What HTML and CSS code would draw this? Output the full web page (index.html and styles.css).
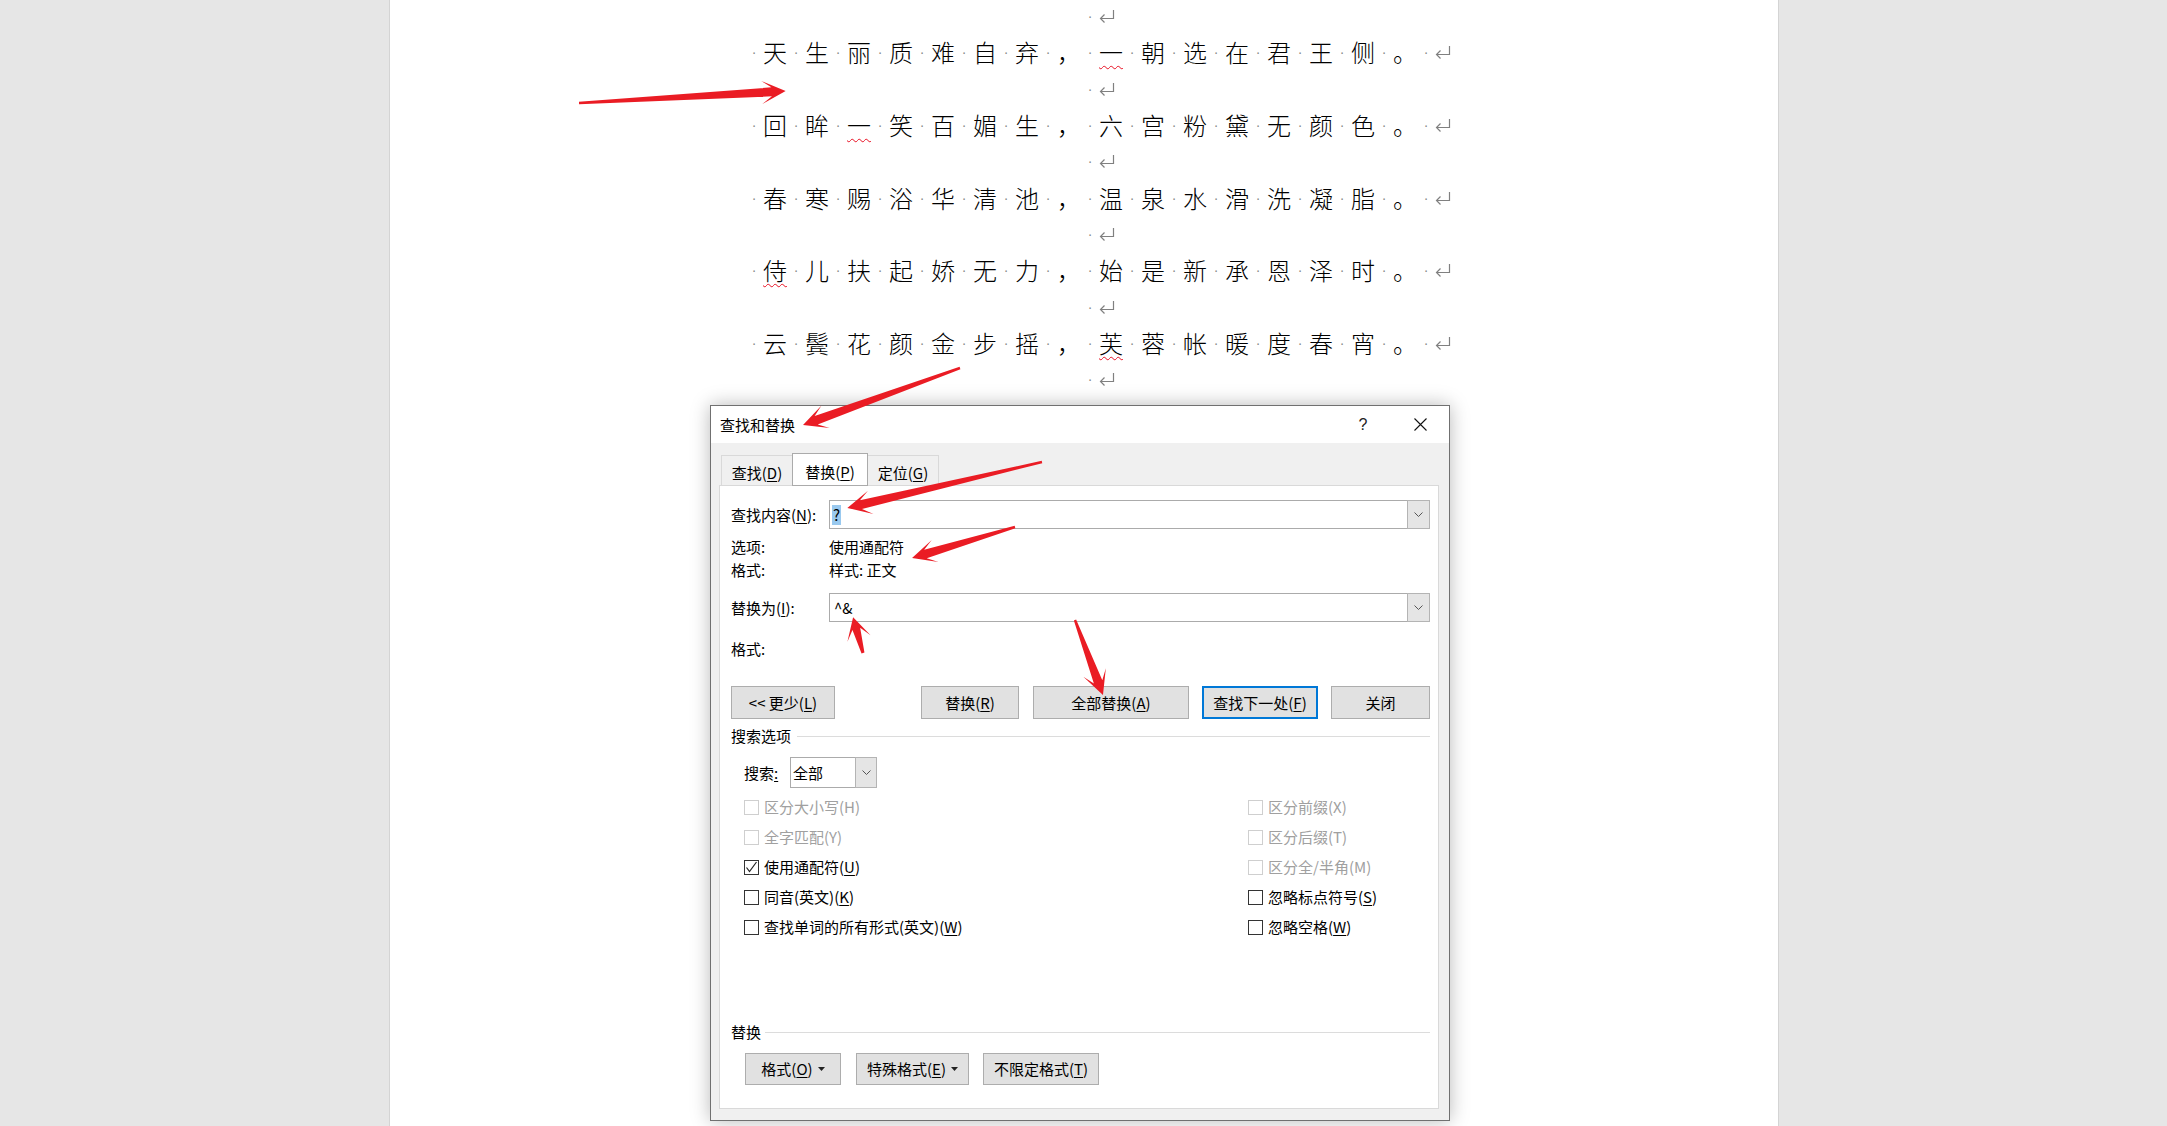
FILE: index.html
```html
<!DOCTYPE html>
<html lang="zh-CN">
<head>
<meta charset="utf-8">
<title>查找和替换</title>
<link rel="stylesheet" href="styles.css">
</head>
<body>
<div class="page">
  <div class="doc">
    <p class="ln"><i class="s">·</i><svg class="ret" viewBox="0 0 16 14"><path d="M14.5 0 V8.5 H1.5 M5.5 4.5 L1.5 8.5 L5.5 12.5"/></svg></p>
    <p class="ln"><i class="s">·</i>天<i class="s">·</i>生<i class="s">·</i>丽<i class="s">·</i>质<i class="s">·</i>难<i class="s">·</i>自<i class="s">·</i>弃<i class="s">·</i>，<i class="s">·</i><span class="err">一</span><i class="s">·</i>朝<i class="s">·</i>选<i class="s">·</i>在<i class="s">·</i>君<i class="s">·</i>王<i class="s">·</i>侧<i class="s">·</i>。<i class="s">·</i><svg class="ret" viewBox="0 0 16 14"><path d="M14.5 0 V8.5 H1.5 M5.5 4.5 L1.5 8.5 L5.5 12.5"/></svg></p>
    <p class="ln"><i class="s">·</i><svg class="ret" viewBox="0 0 16 14"><path d="M14.5 0 V8.5 H1.5 M5.5 4.5 L1.5 8.5 L5.5 12.5"/></svg></p>
    <p class="ln"><i class="s">·</i>回<i class="s">·</i>眸<i class="s">·</i><span class="err">一</span><i class="s">·</i>笑<i class="s">·</i>百<i class="s">·</i>媚<i class="s">·</i>生<i class="s">·</i>，<i class="s">·</i>六<i class="s">·</i>宫<i class="s">·</i>粉<i class="s">·</i>黛<i class="s">·</i>无<i class="s">·</i>颜<i class="s">·</i>色<i class="s">·</i>。<i class="s">·</i><svg class="ret" viewBox="0 0 16 14"><path d="M14.5 0 V8.5 H1.5 M5.5 4.5 L1.5 8.5 L5.5 12.5"/></svg></p>
    <p class="ln"><i class="s">·</i><svg class="ret" viewBox="0 0 16 14"><path d="M14.5 0 V8.5 H1.5 M5.5 4.5 L1.5 8.5 L5.5 12.5"/></svg></p>
    <p class="ln"><i class="s">·</i>春<i class="s">·</i>寒<i class="s">·</i>赐<i class="s">·</i>浴<i class="s">·</i>华<i class="s">·</i>清<i class="s">·</i>池<i class="s">·</i>，<i class="s">·</i>温<i class="s">·</i>泉<i class="s">·</i>水<i class="s">·</i>滑<i class="s">·</i>洗<i class="s">·</i>凝<i class="s">·</i>脂<i class="s">·</i>。<i class="s">·</i><svg class="ret" viewBox="0 0 16 14"><path d="M14.5 0 V8.5 H1.5 M5.5 4.5 L1.5 8.5 L5.5 12.5"/></svg></p>
    <p class="ln"><i class="s">·</i><svg class="ret" viewBox="0 0 16 14"><path d="M14.5 0 V8.5 H1.5 M5.5 4.5 L1.5 8.5 L5.5 12.5"/></svg></p>
    <p class="ln"><i class="s">·</i><span class="err">侍</span><i class="s">·</i>儿<i class="s">·</i>扶<i class="s">·</i>起<i class="s">·</i>娇<i class="s">·</i>无<i class="s">·</i>力<i class="s">·</i>，<i class="s">·</i>始<i class="s">·</i>是<i class="s">·</i>新<i class="s">·</i>承<i class="s">·</i>恩<i class="s">·</i>泽<i class="s">·</i>时<i class="s">·</i>。<i class="s">·</i><svg class="ret" viewBox="0 0 16 14"><path d="M14.5 0 V8.5 H1.5 M5.5 4.5 L1.5 8.5 L5.5 12.5"/></svg></p>
    <p class="ln"><i class="s">·</i><svg class="ret" viewBox="0 0 16 14"><path d="M14.5 0 V8.5 H1.5 M5.5 4.5 L1.5 8.5 L5.5 12.5"/></svg></p>
    <p class="ln"><i class="s">·</i>云<i class="s">·</i>鬓<i class="s">·</i>花<i class="s">·</i>颜<i class="s">·</i>金<i class="s">·</i>步<i class="s">·</i>摇<i class="s">·</i>，<i class="s">·</i><span class="err">芙</span><i class="s">·</i>蓉<i class="s">·</i>帐<i class="s">·</i>暖<i class="s">·</i>度<i class="s">·</i>春<i class="s">·</i>宵<i class="s">·</i>。<i class="s">·</i><svg class="ret" viewBox="0 0 16 14"><path d="M14.5 0 V8.5 H1.5 M5.5 4.5 L1.5 8.5 L5.5 12.5"/></svg></p>
    <p class="ln"><i class="s">·</i><svg class="ret" viewBox="0 0 16 14"><path d="M14.5 0 V8.5 H1.5 M5.5 4.5 L1.5 8.5 L5.5 12.5"/></svg></p>
  </div>
</div>

<div class="dlg">
  <div class="titlebar">
    <span class="ttl">查找和替换</span>
    <span class="tbtn help">?</span>
    <span class="tbtn close"><svg width="13" height="13" viewBox="0 0 13 13"><path d="M0.5 0.5 L12.5 12.5 M12.5 0.5 L0.5 12.5" stroke="#111" stroke-width="1.1"/></svg></span>
  </div>
  <div class="dbody">
    <div class="tabs">
      <div class="tab first"><span>查找(<u>D</u>)</span></div>
      <div class="tab sel"><span>替换(<u>P</u>)</span></div>
      <div class="tab last"><span>定位(<u>G</u>)</span></div>
    </div>
    <div class="panel">
      <div class="frow">
        <span class="lbl">查找内容(<u>N</u>):</span>
        <div class="combo">
          <div class="cval"><span class="hl">?</span></div>
          <div class="cdrop"><svg width="9" height="5" viewBox="0 0 9 5"><path d="M0.5 0.5 L4.5 4.5 L8.5 0.5" fill="none" stroke="#555" stroke-width="1"/></svg></div>
        </div>
      </div>
      <div class="info first"><span class="lbl">选项:</span><span>使用通配符</span></div>
      <div class="info"><span class="lbl">格式:</span><span>样式: 正文</span></div>
      <div class="frow rrow">
        <span class="lbl">替换为(<u>I</u>):</span>
        <div class="combo">
          <div class="cval"><span class="val">^&amp;</span></div>
          <div class="cdrop"><svg width="9" height="5" viewBox="0 0 9 5"><path d="M0.5 0.5 L4.5 4.5 L8.5 0.5" fill="none" stroke="#555" stroke-width="1"/></svg></div>
        </div>
      </div>
      <div class="info fmt2"><span class="lbl">格式:</span></div>
      <div class="btnrow">
        <div class="btn b-less"><span>&lt;&lt; 更少(<u>L</u>)</span></div>
        <div class="btngrp">
          <div class="btn b-rep"><span>替换(<u>R</u>)</span></div>
          <div class="btn b-all"><span>全部替换(<u>A</u>)</span></div>
          <div class="btn b-next"><span>查找下一处(<u>F</u>)</span></div>
          <div class="btn b-close"><span>关闭</span></div>
        </div>
      </div>
      <div class="grp">搜索选项</div>
      <div class="srow">
        <span class="slbl">搜索<u>:</u></span>
        <div class="sel">
          <span class="sval">全部</span>
          <div class="sdrop"><svg width="9" height="5" viewBox="0 0 9 5"><path d="M0.5 0.5 L4.5 4.5 L8.5 0.5" fill="none" stroke="#555" stroke-width="1"/></svg></div>
        </div>
      </div>
      <div class="checks">
        <div class="ck dis"><span class="box"></span><span class="t">区分大小写(H)</span></div>
        <div class="ck dis"><span class="box"></span><span class="t">区分前缀(X)</span></div>
        <div class="ck dis"><span class="box"></span><span class="t">全字匹配(Y)</span></div>
        <div class="ck dis"><span class="box"></span><span class="t">区分后缀(T)</span></div>
        <div class="ck"><span class="box"><svg width="13" height="13" viewBox="0 0 13 13"><path d="M1.5 6.5 L4.5 10.5 L11.5 1" fill="none" stroke="#222" stroke-width="1.2"/></svg></span><span class="t">使用通配符(<u>U</u>)</span></div>
        <div class="ck dis"><span class="box"></span><span class="t">区分全/半角(M)</span></div>
        <div class="ck"><span class="box"></span><span class="t">同音(英文)(<u>K</u>)</span></div>
        <div class="ck"><span class="box"></span><span class="t">忽略标点符号(<u>S</u>)</span></div>
        <div class="ck"><span class="box"></span><span class="t">查找单词的所有形式(英文)(<u>W</u>)</span></div>
        <div class="ck"><span class="box"></span><span class="t">忽略空格(<u>W</u>)</span></div>
      </div>
      <div class="grp grp2">替换</div>
      <div class="fbtns">
        <div class="btn b-fmt"><span>格式(<u>O</u>)</span><svg class="tri" width="7" height="4" viewBox="0 0 7 4"><polygon points="0,0 7,0 3.5,4" fill="#222"/></svg></div>
        <div class="btn b-spec"><span>特殊格式(<u>E</u>)</span><svg class="tri" width="7" height="4" viewBox="0 0 7 4"><polygon points="0,0 7,0 3.5,4" fill="#222"/></svg></div>
        <div class="btn b-nofmt"><span>不限定格式(<u>T</u>)</span></div>
      </div>
    </div>
  </div>
</div>

<svg class="marks" width="2167" height="1126" viewBox="0 0 2167 1126">
  <g fill="#ea1c24">
    <polygon transform="translate(579 103) rotate(-3.32)" points="0,-1.2 193,-4.5 183,-11.5 207,0 183,11.5 193,4.5 0,1.2"/>
    <polygon transform="translate(960 368) rotate(160.05)" points="0,-1.2 153,-4.5 143,-12 167,0 143,12 153,4.5 0,1.2"/>
    <polygon transform="translate(1042 462) rotate(166.73)" points="0,-1.2 186,-4.5 176,-12 200,0 176,12 186,4.5 0,1.2"/>
    <polygon transform="translate(1015 527) rotate(163.25)" points="0,-1.2 93.5,-4.5 83.5,-11.5 107.5,0 83.5,11.5 93.5,4.5 0,1.2"/>
    <polygon transform="translate(863 653) rotate(-105.52)" points="0,-1.5 25,-4 15,-12 37,0 15,12 25,4 0,1.5"/>
    <polygon transform="translate(1075 620) rotate(69.53)" points="0,-1.2 66,-4.5 56,-12 80,0 56,12 66,4.5 0,1.2"/>
  </g>
</svg>
</body>
</html>
```

FILE: styles.css
```css
html, body {
  margin: 0;
  padding: 0;
}
body {
  width: 2167px;
  height: 1126px;
  overflow: hidden;
  position: relative;
  background: #e6e6e6;
  font-family: "Noto Sans CJK SC", sans-serif;
}

/* ---------- Word page ---------- */
.page {
  margin-left: 389px;
  width: 1390px;
  height: 1126px;
  box-sizing: border-box;
  background: #fff;
  border-left: 1px solid #d4d4d4;
  border-right: 1px solid #d4d4d4;
  padding-left: 28px;
}
.doc p {
  margin: 0;
}
.ln {
  height: 36.35px;
  line-height: 32px;
  font-size: 24px;
  font-weight: 300;
  text-align: center;
  white-space: nowrap;
  color: #000;
}
.s {
  display: inline-block;
  width: 18px;
  text-align: center;
  font: normal 14px/1 "Liberation Sans", sans-serif;
  color: #8a8a8a;
  vertical-align: 5px;
}
.ret {
  width: 16px;
  height: 14px;
  vertical-align: 2px;
  fill: none;
  stroke: #808080;
  stroke-width: 1.2;
}
.err {
  text-decoration: underline wavy #e81123;
  text-decoration-thickness: 1px;
  text-underline-offset: 3px;
}

/* ---------- dialog ---------- */
.dlg {
  position: absolute;
  left: 710px;
  top: 405px;
  width: 740px;
  height: 716px;
  box-sizing: border-box;
  border: 1px solid #707070;
  background: #f0f0f0;
  box-shadow: 0 0 18px rgba(0, 0, 0, 0.28);
  font-family: "Noto Sans CJK SC", sans-serif;
  font-size: 15px;
  line-height: 20px;
  color: #000;
  display: flex;
  flex-direction: column;
}
.dlg u {
  text-underline-offset: 2px;
}
.titlebar {
  height: 37px;
  flex: none;
  background: #fff;
  display: flex;
  align-items: center;
  padding-left: 9px;
}
.ttl {
  flex: 1;
}
.tbtn {
  height: 37px;
  display: flex;
  align-items: center;
  justify-content: center;
}
.help {
  width: 56px;
  font: 16px/1 "Liberation Sans", sans-serif;
  color: #222;
}
.close {
  width: 58px;
}

.dbody {
  flex: 1;
  padding: 10px 10px 11px 8px;
  display: flex;
  flex-direction: column;
}
.tabs {
  height: 32px;
  flex: none;
  display: flex;
  align-items: flex-end;
  padding-left: 2px;
}
.tab {
  height: 30px;
  box-sizing: border-box;
  border: 1px solid #d9d9d9;
  border-bottom: none;
  padding-top: 4px;
  display: flex;
  align-items: center;
  justify-content: center;
}
.tab.first {
  width: 71px;
  border-right: none;
}
.tab.sel {
  width: 76px;
  height: 33px;
  background: #fff;
  margin-bottom: -1px;
  position: relative;
  z-index: 1;
}
.tab.last {
  width: 71px;
  border-left: none;
}

.panel {
  height: 624px;
  flex: none;
  box-sizing: border-box;
  border: 1px solid #d9d9d9;
  background: #fff;
  padding: 14px 8px 0 11px;
}
.frow {
  height: 29px;
  display: flex;
  align-items: center;
}
.lbl {
  width: 98px;
  flex: none;
}
.combo {
  flex: 1;
  height: 29px;
  box-sizing: border-box;
  border: 1px solid #ababab;
  background: #fff;
  display: flex;
}
.cval {
  flex: 1;
  padding-left: 2px;
  display: flex;
  align-items: center;
}
.hl {
  background: #99c9ef;
  padding: 0 1px;
  line-height: 20px;
}
.val {
  padding-left: 2px;
}
.cdrop {
  width: 21px;
  margin: -1px -1px -1px 0;
  border: 1px solid #b4b4b4;
  background: #e5e5e5;
  display: flex;
  align-items: center;
  justify-content: center;
}
.info {
  height: 23px;
  display: flex;
  align-items: center;
}
.info.first {
  margin-top: 6px;
}
.rrow {
  margin-top: 12px;
}
.fmt2 {
  margin-top: 15px;
}

.btn {
  box-sizing: border-box;
  height: 33px;
  border: 1px solid #adadad;
  background: #e1e1e1;
  display: flex;
  align-items: center;
  justify-content: center;
}
.btnrow {
  margin-top: 26px;
  display: flex;
}
.btngrp {
  margin-left: auto;
  display: flex;
}
.b-less { width: 104px; }
.b-rep { width: 98px; }
.b-all { width: 156px; margin-left: 14px; }
.b-next { width: 116px; margin-left: 13px; border: 2px solid #0078d7; }
.b-close { width: 99px; margin-left: 13px; }

.grp {
  margin-top: 7px;
  height: 20px;
  display: flex;
  align-items: center;
  gap: 6px;
}
.grp::after {
  content: "";
  flex: 1;
  height: 1px;
  background: #dcdcdc;
}
.grp2 {
  margin-top: 80px;
  gap: 4px;
}

.srow {
  margin-top: 11px;
  padding-left: 13px;
  height: 31px;
  display: flex;
  align-items: center;
}
.slbl {
  width: 46px;
}
.sel {
  width: 87px;
  height: 31px;
  box-sizing: border-box;
  border: 1px solid #ababab;
  background: #fff;
  display: flex;
}
.sval {
  flex: 1;
  padding-left: 2px;
  display: flex;
  align-items: center;
}
.sdrop {
  width: 20px;
  margin: -1px -1px -1px 0;
  border: 1px solid #b4b4b4;
  background: #e5e5e5;
  display: flex;
  align-items: center;
  justify-content: center;
}

.checks {
  margin-top: 4px;
  padding-left: 13px;
  display: grid;
  grid-template-columns: 504px auto;
  grid-auto-rows: 30px;
}
.ck {
  display: flex;
  align-items: center;
  gap: 5px;
}
.box {
  width: 15px;
  height: 15px;
  box-sizing: border-box;
  border: 1px solid #333;
  background: #fff;
  display: flex;
  align-items: center;
  justify-content: center;
}
.ck.dis {
  color: #a0a0a0;
}
.ck.dis .box {
  border-color: #cfcfcf;
}

.fbtns {
  margin-top: 11px;
  padding-left: 14px;
  display: flex;
}
.fbtns .btn {
  height: 32px;
}
.b-fmt { width: 96px; }
.b-spec { width: 113px; margin-left: 15px; }
.b-nofmt { width: 116px; margin-left: 14px; }
.tri {
  margin-left: 5px;
}

/* ---------- annotation arrows ---------- */
.marks {
  position: absolute;
  left: 0;
  top: 0;
  pointer-events: none;
  z-index: 10;
}
```
